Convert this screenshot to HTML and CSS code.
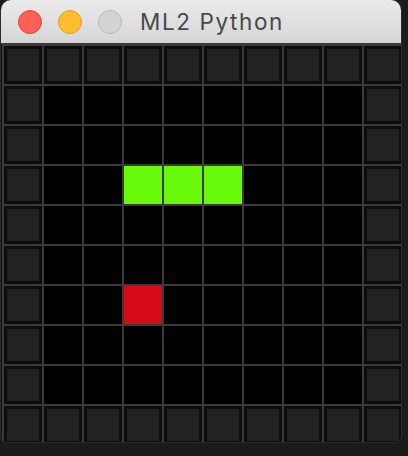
FILE: index.html
```html
<!DOCTYPE html>
<html>
<head>
<meta charset="utf-8">
<link rel="stylesheet" href="styles.css">
</head>
<body>
<div class="window">
  <div class="titlebar">
    <div class="lights">
      <span class="light close"></span>
      <span class="light min"></span>
      <span class="light max"></span>
    </div>
    <div class="title">ML2 Python</div>
  </div>
  <div class="board">
    <div class="w"></div><div class="w"></div><div class="w"></div><div class="w"></div><div class="w"></div><div class="w"></div><div class="w"></div><div class="w"></div><div class="w"></div><div class="w"></div>
    <div class="w"></div><div class="c"></div><div class="c"></div><div class="c"></div><div class="c"></div><div class="c"></div><div class="c"></div><div class="c"></div><div class="c"></div><div class="w"></div>
    <div class="w"></div><div class="c"></div><div class="c"></div><div class="c"></div><div class="c"></div><div class="c"></div><div class="c"></div><div class="c"></div><div class="c"></div><div class="w"></div>
    <div class="w"></div><div class="c"></div><div class="c"></div><div class="g"></div><div class="g"></div><div class="g"></div><div class="c"></div><div class="c"></div><div class="c"></div><div class="w"></div>
    <div class="w"></div><div class="c"></div><div class="c"></div><div class="c"></div><div class="c"></div><div class="c"></div><div class="c"></div><div class="c"></div><div class="c"></div><div class="w"></div>
    <div class="w"></div><div class="c"></div><div class="c"></div><div class="c"></div><div class="c"></div><div class="c"></div><div class="c"></div><div class="c"></div><div class="c"></div><div class="w"></div>
    <div class="w"></div><div class="c"></div><div class="c"></div><div class="r"></div><div class="c"></div><div class="c"></div><div class="c"></div><div class="c"></div><div class="c"></div><div class="w"></div>
    <div class="w"></div><div class="c"></div><div class="c"></div><div class="c"></div><div class="c"></div><div class="c"></div><div class="c"></div><div class="c"></div><div class="c"></div><div class="w"></div>
    <div class="w"></div><div class="c"></div><div class="c"></div><div class="c"></div><div class="c"></div><div class="c"></div><div class="c"></div><div class="c"></div><div class="c"></div><div class="w"></div>
    <div class="w"></div><div class="w"></div><div class="w"></div><div class="w"></div><div class="w"></div><div class="w"></div><div class="w"></div><div class="w"></div><div class="w"></div><div class="w"></div>
  </div>
</div>
</body>
</html>
```
FILE: styles.css
```css
html, body {
  margin: 0;
  padding: 0;
  background: #1b1b1b;
  width: 408px;
  height: 456px;
  overflow: hidden;
}
.window {
  margin-left: 1px;
  width: 400px;
  height: 442px;
  border-radius: 10px 10px 6px 6px;
  overflow: hidden;
  background: #111;
  box-shadow: 0 0 0 1px #2a2a2a;
}
.titlebar {
  height: 43px;
  border-bottom: 1px solid #3c3c3c;
  background: linear-gradient(#ebebeb, #d5d5d5);
  display: flex;
  align-items: center;
  padding-left: 17px;
  box-sizing: content-box;
}
.lights {
  display: flex;
  gap: 16px;
}
.light {
  width: 22px;
  height: 22px;
  border-radius: 50%;
  border: 1px solid;
}
.close { background: #fe5f57; border-color: #e0443e; }
.min { background: #febc2e; border-color: #dea123; }
.max { background: #d3d3d3; border-color: #b9b9b9; }
.title {
  margin-left: 18px;
  font-family: Inter, "Liberation Sans", Arial, sans-serif;
  font-size: 22.5px;
  font-weight: 400;
  letter-spacing: 1.6px;
  color: #484848;
  line-height: 1;
  margin-top: 1px;
}
.board {
  margin-left: 1px;
  width: 402px;
  height: 402px;
  box-sizing: border-box;
  padding: 2px;
  background: #3a3a3a;
  display: grid;
  grid-template-columns: repeat(10, 38px);
  grid-template-rows: repeat(10, 38px);
  gap: 2px;
}
.c { background: #000; }
.w { background: #222; box-shadow: inset 0 0 0 3px #0d0d0d; }
.g { background: #68f90b; }
.r { background: #d80916; }
```
